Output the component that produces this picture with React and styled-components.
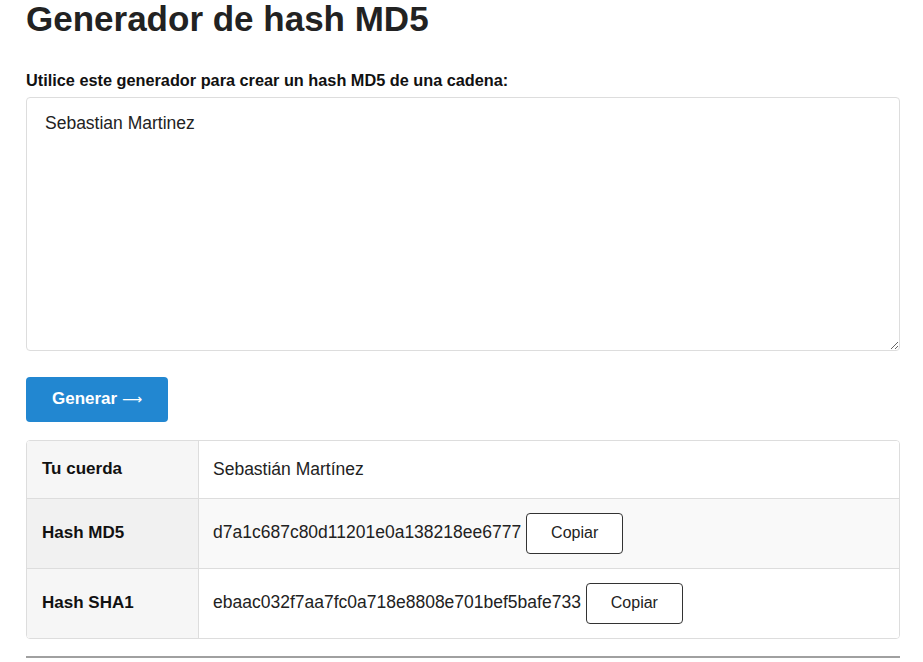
import React, { useState } from "react";
import styled, { createGlobalStyle } from "styled-components";

const GlobalStyle = createGlobalStyle`
  body {
    margin: 0;
    background: #fff;
    font-family: "Liberation Sans", Arial, sans-serif;
    color: #222;
  }
`;

const Page = styled.div`
  padding: 0 23px 0 26px;
`;

const Title = styled.h1`
  margin: 0;
  font-size: 35px;
  line-height: 1.1;
  font-weight: bold;
  color: #222;
`;

const Label = styled.label`
  display: block;
  margin-top: 30px;
  font-size: 16.3px;
  line-height: 22px;
  font-weight: bold;
  color: #111;
`;

const Input = styled.textarea`
  display: block;
  box-sizing: border-box;
  width: 100%;
  height: 254px;
  margin-top: 6px;
  padding: 12px 18px;
  border: 1px solid #ddd;
  border-radius: 4px;
  font-family: "Liberation Sans", Arial, sans-serif;
  font-size: 17.5px;
  line-height: 1.5;
  color: #222;
  resize: vertical;
  outline: none;
`;

const GenerateButton = styled.button`
  display: block;
  margin-top: 26px;
  height: 45px;
  width: 142px;
  border: none;
  border-radius: 4px;
  background: #2287d1;
  color: #fff;
  font-family: "Liberation Sans", Arial, sans-serif;
  font-size: 17px;
  font-weight: bold;
  cursor: pointer;
`;

const Arrow = styled.span`
  font-family: "DejaVu Sans", sans-serif;
  font-weight: normal;
  font-size: 14px;
`;

const Results = styled.table`
  width: 100%;
  margin-top: 18px;
  border-collapse: separate;
  border-spacing: 0;
  border: 1px solid #ddd;
  border-radius: 4px;
  overflow: hidden;
  font-size: 17.5px;
`;

const Row = styled.tr`
  background: ${(p) => (p.$striped ? "#f9f9f9" : "#fff")};
  height: ${(p) => p.$height}px;
`;

const Head = styled.th`
  width: 141px;
  padding: 0 15px;
  text-align: left;
  font-size: 17px;
  font-weight: bold;
  color: #111;
  background: ${(p) => (p.$striped ? "#f1f1f1" : "#f6f6f6")};
  border-right: 1px solid #ddd;
  border-top: ${(p) => (p.$first ? "none" : "1px solid #ddd")};
`;

const Value = styled.td`
  padding: 0 14px;
  color: #222;
  vertical-align: middle;
  border-top: ${(p) => (p.$first ? "none" : "1px solid #ddd")};
`;

const CopyButton = styled.button`
  margin-left: 5px;
  width: 97px;
  height: 41px;
  vertical-align: middle;
  background: #fff;
  border: 1px solid #333;
  border-radius: 4px;
  font-family: "Liberation Sans", Arial, sans-serif;
  font-size: 16px;
  color: #222;
  cursor: pointer;
`;

const Rule = styled.hr`
  margin: 17px 0 0;
  border: none;
  border-top: 2px solid #a0a0a0;
`;

export default function App() {
  const [text, setText] = useState("Sebastian Martinez");
  const rows = [
    { label: "Hash MD5", value: "d7a1c687c80d11201e0a138218ee6777" },
    { label: "Hash SHA1", value: "ebaac032f7aa7fc0a718e8808e701bef5bafe733" },
  ];

  return (
    <Page>
      <GlobalStyle />
      <Title>Generador de hash MD5</Title>
      <Label htmlFor="src">
        Utilice este generador para crear un hash MD5 de una cadena:
      </Label>
      <Input id="src" value={text} onChange={(e) => setText(e.target.value)} />
      <GenerateButton>
        Generar <Arrow>⟶</Arrow>
      </GenerateButton>
      <Results>
        <tbody>
          <Row $height={57}>
            <Head $first>Tu cuerda</Head>
            <Value $first>Sebastián Martínez</Value>
          </Row>
          {rows.map((r, i) => (
            <Row key={r.label} $height={70} $striped={i === 0}>
              <Head $striped={i === 0}>{r.label}</Head>
              <Value>
                {r.value}
                <CopyButton>Copiar</CopyButton>
              </Value>
            </Row>
          ))}
        </tbody>
      </Results>
      <Rule />
    </Page>
  );
}
